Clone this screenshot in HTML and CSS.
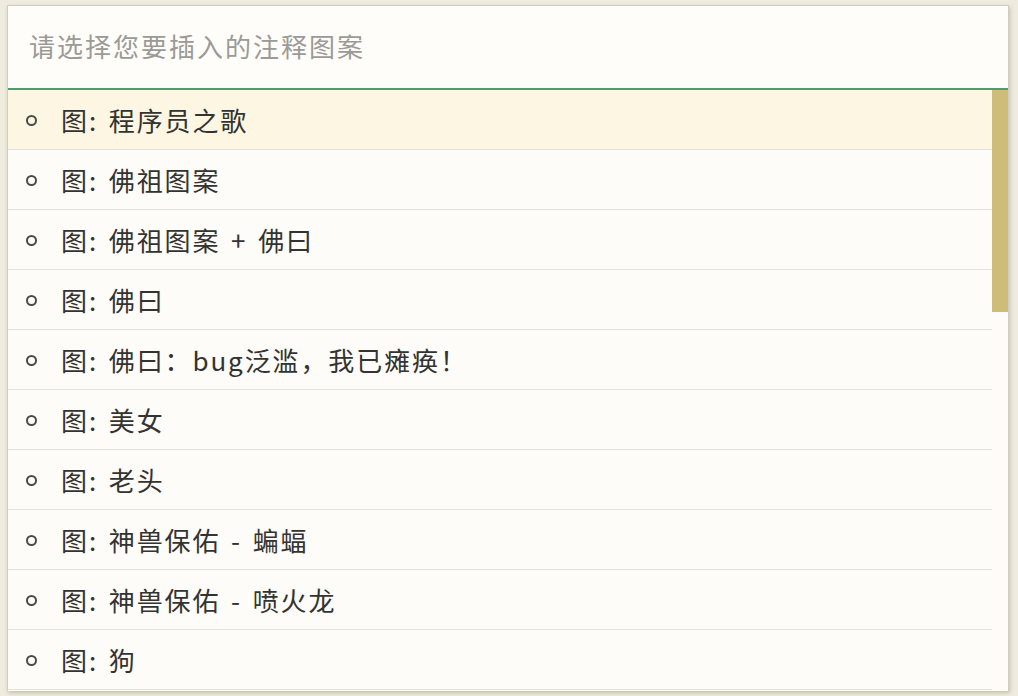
FILE: index.html
```html
<!DOCTYPE html>
<html lang="zh">
<head>
<meta charset="utf-8">
<title>注释图案</title>
<link rel="stylesheet" href="styles.css">
</head>
<body>
<div class="panel">
  <div class="search">
    <input class="search-input" type="text" placeholder="请选择您要插入的注释图案">
  </div>
  <div class="body">
    <ul class="list">
      <li class="item selected"><span class="dot"></span><span class="label">图: 程序员之歌</span></li>
      <li class="item"><span class="dot"></span><span class="label">图: 佛祖图案</span></li>
      <li class="item"><span class="dot"></span><span class="label">图: 佛祖图案 + 佛曰</span></li>
      <li class="item"><span class="dot"></span><span class="label">图: 佛曰</span></li>
      <li class="item"><span class="dot"></span><span class="label">图: 佛曰：bug泛滥，我已瘫痪！</span></li>
      <li class="item"><span class="dot"></span><span class="label">图: 美女</span></li>
      <li class="item"><span class="dot"></span><span class="label">图: 老头</span></li>
      <li class="item"><span class="dot"></span><span class="label">图: 神兽保佑 - 蝙蝠</span></li>
      <li class="item"><span class="dot"></span><span class="label">图: 神兽保佑 - 喷火龙</span></li>
      <li class="item"><span class="dot"></span><span class="label">图: 狗</span></li>
    </ul>
    <div class="scrollbar"><div class="thumb"></div></div>
  </div>
</div>
</body>
</html>
```
FILE: styles.css
```css
html, body {
  margin: 0;
  padding: 0;
  height: 100%;
}
body {
  background: #efecdf;
  font-family: "Noto Sans CJK SC", "Noto Sans", sans-serif;
  padding: 5px 9px 0 7px;
  box-sizing: border-box;
  overflow: hidden;
}
.panel {
  background: #fdfcf8;
  border: 1px solid #cfcdc3;
  border-bottom: none;
  box-shadow: 1px 2px 4px rgba(120, 110, 80, 0.35);
  height: 685px;
  display: flex;
  flex-direction: column;
}
.search {
  height: 84px;
  box-sizing: border-box;
  padding: 0 0 4px 21px;
  border-bottom: 2px solid #4f9d6c;
  display: flex;
  align-items: center;
  background: #fefdf9;
  flex: none;
}
.search-input {
  border: none;
  outline: none;
  background: transparent;
  font-family: inherit;
  font-size: 26px;
  letter-spacing: 2px;
  color: #333;
  width: 100%;
  padding: 0;
}
.search-input::placeholder {
  color: #9b9a97;
}
.body {
  display: flex;
  flex: 1;
  min-height: 0;
}
.list {
  list-style: none;
  margin: 0;
  padding: 0;
  flex: 1;
}
.item {
  height: 59px;
  border-bottom: 1px solid #e3e1da;
  display: flex;
  align-items: center;
  padding-left: 18px;
  color: #333331;
  font-size: 26px;
  letter-spacing: 1.9px;
  word-spacing: 3px;
}
.item.selected {
  background: #fcf6e3;
}
.dot {
  width: 7px;
  height: 7px;
  border: 2px solid #4a4a47;
  border-radius: 50%;
  margin-right: 24px;
  margin-top: 2px;
  flex: none;
}
.label {
  line-height: 1;
}
.scrollbar {
  width: 16px;
  flex: none;
}
.thumb {
  height: 222px;
  background: #cdbd78;
}
```
